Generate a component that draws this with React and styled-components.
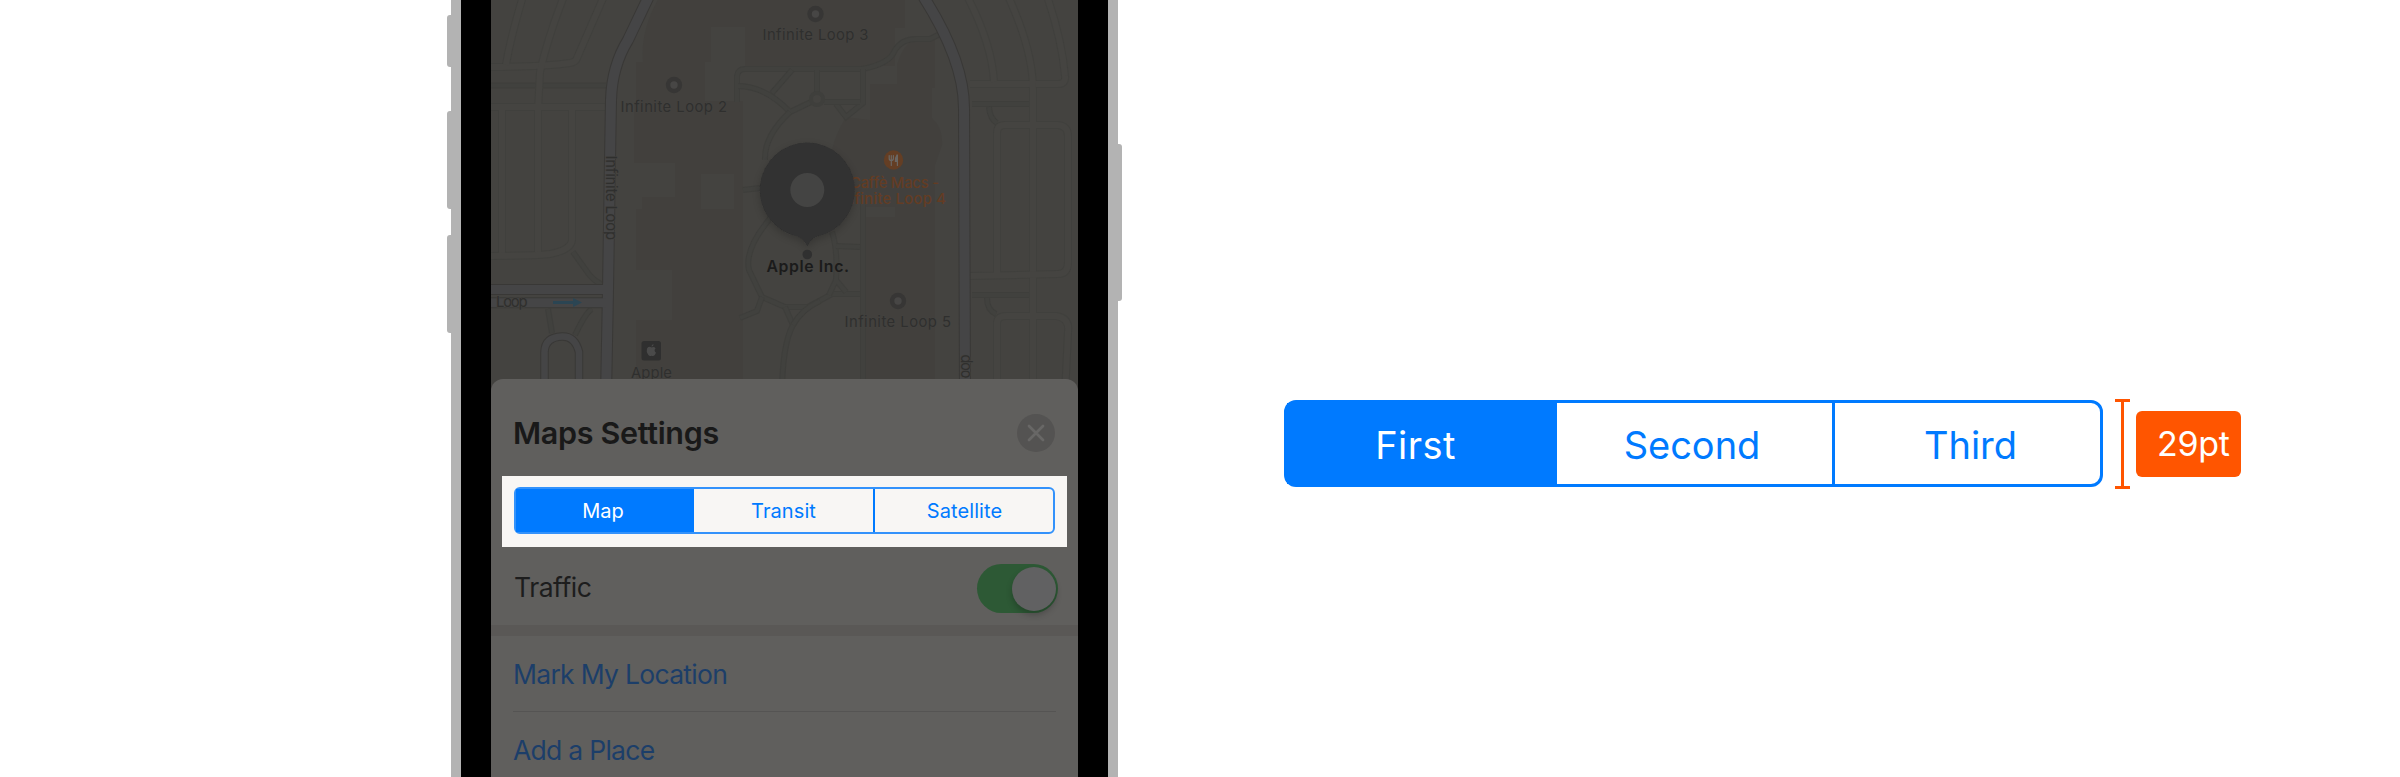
import React from "react";
import styled, { createGlobalStyle } from "styled-components";

const GlobalStyle = createGlobalStyle`
  * { box-sizing: border-box; }
  body { margin: 0; background: #fff; font-family: Inter, "Liberation Sans", sans-serif; }
`;

const Page = styled.main`
  display: flex;
  align-items: flex-start;
  width: 2400px;
  height: 777px;
  overflow: hidden;
  padding-left: 451px;
  background: #fff;
`;

const Phone = styled.section`
  position: relative;
  width: 667px;
  height: 777px;
  flex: none;
  padding: 0 10px;
  background: #b3b3b3;
`;

const SideButton = styled.span`
  position: absolute;
  width: 4px;
  top: ${(p) => p.$top}px;
  height: ${(p) => p.$height}px;
  ${(p) => (p.$side === "left" ? "left: -4px; border-radius: 3px 0 0 3px;" : "right: -4px; border-radius: 0 3px 3px 0;")}
  background: #b3b3b3;
`;

const Bezel = styled.div`
  height: 100%;
  padding: 0 30px;
  background: #000;
`;

const Screen = styled.div`
  display: flex;
  flex-direction: column;
  height: 100%;
  background: #444340;
  overflow: hidden;
`;

const MapView = styled.svg`
  display: block;
  flex: none;
  width: 587px;
  height: 395px;
  margin-bottom: -16px;
`;

const Sheet = styled.div`
  position: relative;
  flex: 1;
  border-radius: 12px 12px 0 0;
  background: #605f5d;
`;

const SheetHeader = styled.header`
  display: flex;
  align-items: center;
  justify-content: space-between;
  height: 97px;
  padding: 11px 23px 0 22px;
`;

const SheetTitle = styled.h1`
  margin: 0;
  color: #191919;
  font-size: 30.5px;
  line-height: 40px;
  font-weight: 600;
  letter-spacing: ${(p) => p.$tracking}px;
`;

const CloseButton = styled.button`
  display: grid;
  place-items: center;
  width: 38px;
  height: 38px;
  padding: 0;
  border: 0;
  border-radius: 50%;
  background: #545352;
`;

const Highlight = styled.div`
  height: 71px;
  margin: 0 11px;
  padding: 11px 12px 12px;
  background: #f8f6f4;
`;

const Segments = styled.div`
  display: grid;
  grid-template-columns: ${(p) => (p.$large ? "270px 278px 265px" : "178px 181px 178px")};
  width: ${(p) => (p.$large ? 819 : 541)}px;
  height: ${(p) => (p.$large ? 87 : 47)}px;
  border: ${(p) => (p.$large ? "3px solid #007aff" : "2px solid #3392fb")};
  border-radius: ${(p) => (p.$large ? 12 : 6)}px;
  background: linear-gradient(90deg, #007aff 30px, transparent 30px);
`;

const Segment = styled.div`
  display: flex;
  align-items: center;
  justify-content: center;
  padding-right: ${(p) => p.$right || 0}px;
  padding-left: ${(p) => p.$left || 0}px;
  padding-top: ${(p) => (p.$large ? 4 : 0)}px;
  color: ${(p) => (p.$active ? "#fff" : "#007aff")};
  background: ${(p) => (p.$active ? "#007aff" : "transparent")};
  box-shadow: ${(p) => (p.$divider ? `inset ${p.$large ? -3 : -2}px 0 #007aff` : "none")};
  font-size: ${(p) => (p.$large ? 38 : 20)}px;
  line-height: 1.2;
  letter-spacing: ${(p) => p.$tracking || 0}px;
`;

const SettingRow = styled.div`
  display: flex;
  align-items: center;
  justify-content: space-between;
  height: 78px;
  padding: 4px 20px 0 23px;
  color: #1d1d1d;
  font-size: 26.5px;
  letter-spacing: ${(p) => p.$tracking}px;
`;

const SettingName = styled.span`
  margin-bottom: 3px;
`;

const Toggle = styled.div`
  display: flex;
  justify-content: flex-end;
  width: 81px;
  height: 49px;
  padding: 3px 2px 3px 3px;
  border-radius: 25px;
  background: #2d5935;
`;

const Knob = styled.span`
  width: 44px;
  height: 44px;
  border-radius: 50%;
  background: #616162;
  box-shadow: 0 4px 6px rgba(0, 0, 0, 0.22);
`;

const SectionBand = styled.div`
  height: 11px;
  background: #5a5856;
`;

const LinkRow = styled.div`
  display: flex;
  align-items: center;
  height: ${(p) => p.$height}px;
  margin: 0 22px;
  border-bottom: 1px solid #555453;
  color: #1c3e69;
  font-size: 26.5px;
  letter-spacing: ${(p) => p.$tracking}px;
  white-space: nowrap;
`;

const Spec = styled.section`
  display: flex;
  align-items: flex-start;
  margin: 399px 0 0 166px;
`;

const SpecControl = styled.div`
  padding-top: 1px;
`;

const Measure = styled.div`
  display: flex;
  flex-direction: column;
  align-items: center;
  width: 15px;
  height: 90px;
  margin-left: 12px;
  border-top: 3px solid #ff5500;
  border-bottom: 3px solid #ff5500;
`;

const MeasureStem = styled.span`
  width: 3px;
  flex: 1;
  background: #ff5500;
`;

const SizeBadge = styled.div`
  width: 105px;
  height: 66px;
  margin: 12px 0 0 6px;
  padding-left: 21px;
  border-radius: 6px;
  background: #ff5500;
  color: #fff;
  font-size: 34px;
  line-height: 66px;
  letter-spacing: -0.3px;
`;

const majorRoads = [
  ["M649 -4 L628 40 Q612 66 611 100 L610 160 L608 290 L606 396", 10],
  ["M923 -4 Q964 60 964 108 L965 396", 10],
  ["M485 289.5 H606", 9],
  ["M485 302.7 H606", 9],
  ["M544.5 396 V352 Q545 337 562 336.500 Q575 336 579 352 V396", 6.5],
];

const minorRoads = [
  "M485 67 Q540 67 570 63 Q576 62 577 58 L604 -4",
  "M506 65 Q510 40 523 -4",
  "M538 254 V110 L540 72 Q547 40 564 -4",
  "M485 107 H606",
  "M502 107 V253",
  "M572 107 V240 Q571 250 550 254 Q530 256 485 256",
  "M970 84 H1058 Q1066 84 1065 76 Q1062 40 1047 -4",
  "M1008 -4 Q1033 50 1033 90 V396",
  "M967 -4 Q992 44 994 82",
  "M997 275 V133 Q997 125 1005 125 H1058 Q1068 126 1068 136 V262 Q1068 274 1058 274 L970 276",
  "M997 396 V322 Q998 316 1006 316 H1056 Q1070 318 1068 332 L1065 396",
];

const footpaths = [
  "M485 85.500 H606",
  "M573 252 L588 273 Q593 280 601 284",
  "M548 309 L552 333",
  "M592 309 Q586 312 575 335",
  "M972 104 H1030",
  "M972 295 H1030",
  "M989 107 Q990 119 997 123",
  "M987 298 Q987 310 996 314",
  "M737 102 V76 Q738 69 745 69 H862 Q890 64 895 50 Q902 39 916 39 H930 L940 34",
  "M863 69 V103 L846 117 L836 104",
  "M817 70 V92",
  "M792 70 L772 93",
  "M738 86 Q765 86 790 112 L811 102 M824 102 H860",
  "M790 112 Q764 136 765 160",
  "M743 190 L768 187",
  "M773 215 Q744 248 749 270 L762 297 L785 307 H808 L832 294 L862 294",
  "M740 318 L757 311 L762 297",
  "M785 307 L793 325 Q782 345 782 396",
  "M793 325 Q802 309 820 301",
  "M832 232 Q838 250 836 280 L829 295 M836 280 L846 292",
  "M836 246 L860 247",
  "M863 204 V396",
];

const buildings = [
  "M660 -4 Q640 30 643 62 H636 V102 H634 V163 H675 V197 H642 V209 H636 V270 H672 V320 H636 V396 H743 V101 H705 V62 H711 V27 H745 V68 H805 V66 H895 V28 H905 V-4 Z",
  "M870 84 H897 V65 Q905 38 922 38 H935 V88 H932 V118 Q943 128 942 145 L935 165 V396 H866 V217 H895 V207 H865 L832 150 Q835 135 846 117 L870 120 Z",
];

function Road({ d, width, fill, edge }) {
  return (
    <g fill="none">
      <path d={d} stroke={edge} strokeWidth={width + 2} />
      <path d={d} stroke={fill} strokeWidth={width} />
    </g>
  );
}

function Poi({ x, y }) {
  return (
    <g>
      <circle cx={x} cy={y} r="8.200" fill="#373635" />
      <circle cx={x} cy={y} r="3.700" fill="#474645" />
    </g>
  );
}

function Label({ x, y, length, children, color = "#2f2f2e", size = 14.8, weight = 400, rotate }) {
  return (
    <text
      x={x}
      y={y}
      textLength={length}
      fill={color}
      fontSize={size}
      fontWeight={weight}
      transform={rotate ? `rotate(${rotate} ${x} ${y})` : undefined}
      stroke="#444340"
      strokeWidth="1"
      paintOrder="stroke"
    >
      {children}
    </text>
  );
}

function CampusMap() {
  return (
    <MapView viewBox="491 0 587 395" fontFamily='Inter, "Liberation Sans", sans-serif'>
      <rect x="491" width="587" height="395" fill="#444340" />
      {buildings.map((d) => (
        <path key={d} d={d} fill="#42403d" />
      ))}
      <rect x="701" y="174" width="33" height="35" fill="#444340" />
      {footpaths.map((d) => (
        <Road key={d} d={d} width={4} fill="#41413e" edge="#3e3e3b" />
      ))}
      <circle cx="817" cy="99" r="6" fill="#444340" stroke="#3f3f3c" strokeWidth="4" />
      {minorRoads.map((d) => (
        <path key={d} d={d} fill="none" stroke="#40403d" strokeWidth="8" />
      ))}
      {minorRoads.map((d) => (
        <path key={d} d={d} fill="none" stroke="#454441" strokeWidth="6" />
      ))}
      {majorRoads.map(([d, w]) => (
        <path key={d} d={d} fill="none" stroke="#393836" strokeWidth={w + 2} />
      ))}
      {majorRoads.map(([d, w]) => (
        <path key={d} d={d} fill="none" stroke="#454546" strokeWidth={w} />
      ))}

      <path d="M553 301 H573 V298 L582 302.500 L573 307 V304 H553 Z" fill="#2b4553" />

      <Poi x={815.5} y={14} />
      <Label x={762.5} y={40.3} length={106}>Infinite Loop 3</Label>
      <Poi x={674} y={85} />
      <Label x={620.5} y={112} length={106.5}>Infinite Loop 2</Label>
      <Poi x={898} y={301} />
      <Label x={844.5} y={327.3} length={106.5}>Infinite Loop 5</Label>
      <Label x={496} y={307.3} length={31.5}>Loop</Label>
      <Label x={605.5} y={155.5} length={84.5} rotate={90}>Infinite Loop</Label>
      <Label x={969.5} y={378.5} length={24} rotate={-90}>oop</Label>

      <rect x="641.500" y="341" width="19.500" height="19.500" rx="2.500" fill="#2f2f2f" />
      <path
        d="M651.700 347.400 Q648.200 345.600 646.900 348.700 Q646 351.700 648.200 354.800 Q649.500 356.700 651.600 355.700 Q653.400 356.700 654.800 355 L656 352.700 Q653.500 351 655.500 348.200 Q654.200 346.500 651.700 347.400 Z M651.500 346.700 Q651.300 344.600 653.600 344 Q653.700 346.100 651.500 346.700 Z"
        fill="#4a4a4a"
      />
      <Label x={631} y={378} length={41}>Apple</Label>

      <circle cx="893.500" cy="160" r="9.700" fill="#643e24" />
      <g fill="none" stroke="#6b6763" strokeWidth="1.200" strokeLinecap="round">
        <path d="M889.200 155.500 V158.500 Q889.200 160.500 891.300 160.500 Q893.400 160.500 893.400 158.500 V155.500 M891.300 155.500 V165.500" />
        <path d="M897.400 155 V165.500 M897 155 Q894.900 158 895.400 161.500 H897" fill="#6b6763" />
      </g>
      <Label x={850} y={188} length={89} color="#643c23" weight={500}>Caffè Macs -</Label>
      <Label x={841} y={204} length={105} color="#643c23" weight={500}>Infinite Loop 4</Label>

      <defs>
        <filter id="pinShadow" x="-30%" y="-30%" width="160%" height="160%">
          <feDropShadow dx="0" dy="3" stdDeviation="4" floodColor="#000" floodOpacity="0.2" />
        </filter>
      </defs>
      <g fill="#303030">
        <path
          d="M807.300 142.500 A47.500 47.500 0 0 1 817 236.500 Q810.500 239 807.300 246.500 Q804 239 797.600 236.500 A47.500 47.500 0 0 1 807.300 142.500 Z"
          filter="url(#pinShadow)"
        />
        <circle cx="807.300" cy="190" r="17" fill="#444443" />
        <circle cx="807.300" cy="254.500" r="4.800" />
      </g>
      <Label x={766.5} y={272} length={82.500} color="#1b1b1b" size={15.8} weight={600}>Apple Inc.</Label>
    </MapView>
  );
}

export default function App() {
  return (
    <>
      <GlobalStyle />
      <Page>
        <Phone>
          <SideButton $side="left" $top={15} $height={52} />
          <SideButton $side="left" $top={111} $height={98} />
          <SideButton $side="left" $top={235} $height={98} />
          <SideButton $side="right" $top={144} $height={157} />
          <Bezel>
            <Screen>
              <CampusMap />
              <Sheet>
                <SheetHeader>
                  <SheetTitle $tracking={-0.32}>Maps Settings</SheetTitle>
                  <CloseButton aria-label="Close">
                    <svg width="18" height="18" viewBox="0 0 18 18">
                      <path d="M2 2 L16 16 M16 2 L2 16" stroke="#686766" strokeWidth="2.800" strokeLinecap="round" />
                    </svg>
                  </CloseButton>
                </SheetHeader>
                <Highlight>
                  <Segments>
                    <Segment $active $right={4}>Map</Segment>
                    <Segment $divider $right={2} $tracking={0.1}>Transit</Segment>
                    <Segment $left={1} $tracking={0.1}>Satellite</Segment>
                  </Segments>
                </Highlight>
                <SettingRow $tracking={-0.45}>
                  <SettingName>Traffic</SettingName>
                  <Toggle>
                    <Knob />
                  </Toggle>
                </SettingRow>
                <SectionBand />
                <LinkRow $height={76} $tracking={-0.7}>Mark My Location</LinkRow>
                <LinkRow $height={76} $tracking={-0.72}>Add a Place</LinkRow>
              </Sheet>
            </Screen>
          </Bezel>
        </Phone>

        <Spec>
          <SpecControl>
            <Segments $large>
              <Segment $large $active $right={13} $tracking={0.4}>First</Segment>
              <Segment $large $divider $right={8}>Second</Segment>
              <Segment $large $left={6}>Third</Segment>
            </Segments>
          </SpecControl>
          <Measure>
            <MeasureStem />
          </Measure>
          <SizeBadge>29pt</SizeBadge>
        </Spec>
      </Page>
    </>
  );
}
